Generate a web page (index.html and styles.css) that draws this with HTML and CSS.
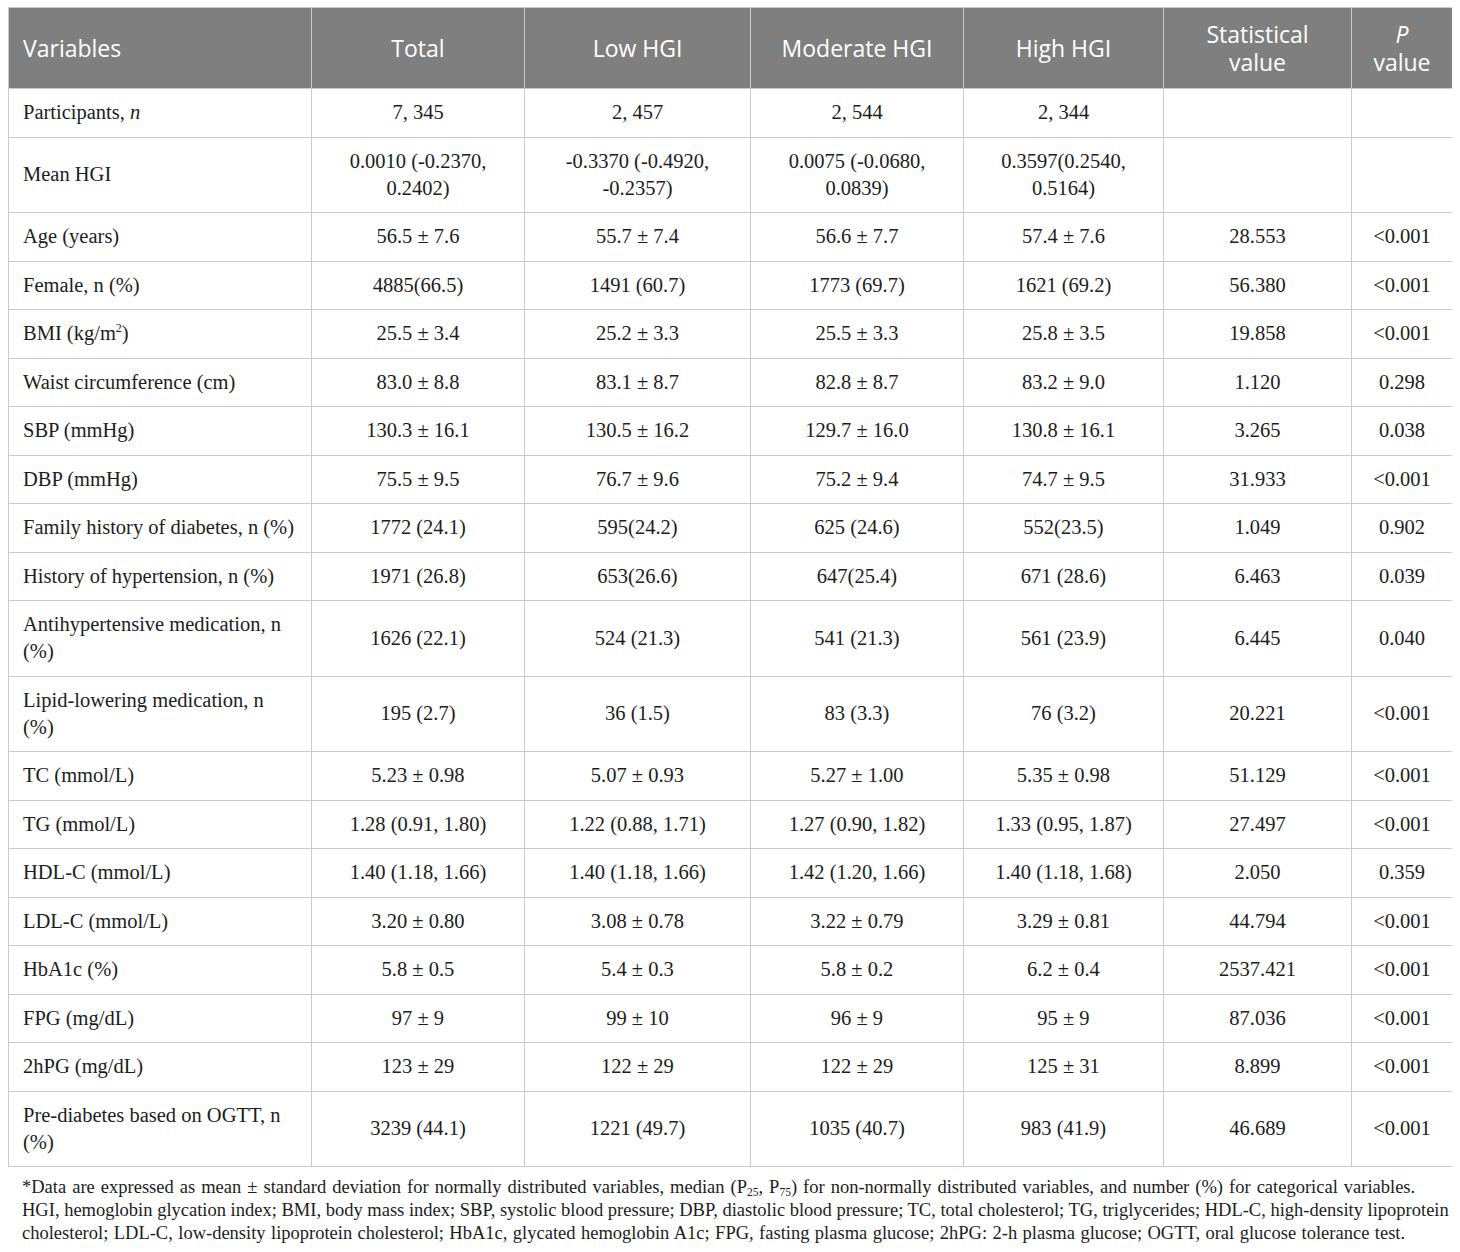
FILE: index.html
```html
<!DOCTYPE html>
<html>
<head>
<meta charset="utf-8">
<link rel="stylesheet" href="styles.css">
</head>
<body>
<table class="data">
<colgroup>
<col class="c1"><col class="c2"><col class="c3"><col class="c4"><col class="c5"><col class="c6"><col class="c7">
</colgroup>
<thead>
<tr><th class="left">Variables</th><th>Total</th><th>Low HGI</th><th>Moderate HGI</th><th>High HGI</th><th><span class="hl">Statistical</span><span class="hl">value</span></th><th><span class="hl"><i>P</i></span><span class="hl">value</span></th></tr>
</thead>
<tbody>
<tr><td class="left">Participants, <i>n</i></td><td>7, 345</td><td>2, 457</td><td>2, 544</td><td>2, 344</td><td></td><td></td></tr>
<tr><td class="left">Mean HGI</td><td>0.0010 (-0.2370,<br>0.2402)</td><td>-0.3370 (-0.4920,<br>-0.2357)</td><td>0.0075 (-0.0680,<br>0.0839)</td><td>0.3597(0.2540,<br>0.5164)</td><td></td><td></td></tr>
<tr><td class="left">Age (years)</td><td>56.5 ± 7.6</td><td>55.7 ± 7.4</td><td>56.6 ± 7.7</td><td>57.4 ± 7.6</td><td>28.553</td><td>&lt;0.001</td></tr>
<tr><td class="left">Female, n (%)</td><td>4885(66.5)</td><td>1491 (60.7)</td><td>1773 (69.7)</td><td>1621 (69.2)</td><td>56.380</td><td>&lt;0.001</td></tr>
<tr><td class="left">BMI (kg/m<sup>2</sup>)</td><td>25.5 ± 3.4</td><td>25.2 ± 3.3</td><td>25.5 ± 3.3</td><td>25.8 ± 3.5</td><td>19.858</td><td>&lt;0.001</td></tr>
<tr><td class="left">Waist circumference (cm)</td><td>83.0 ± 8.8</td><td>83.1 ± 8.7</td><td>82.8 ± 8.7</td><td>83.2 ± 9.0</td><td>1.120</td><td>0.298</td></tr>
<tr><td class="left">SBP (mmHg)</td><td>130.3 ± 16.1</td><td>130.5 ± 16.2</td><td>129.7 ± 16.0</td><td>130.8 ± 16.1</td><td>3.265</td><td>0.038</td></tr>
<tr><td class="left">DBP (mmHg)</td><td>75.5 ± 9.5</td><td>76.7 ± 9.6</td><td>75.2 ± 9.4</td><td>74.7 ± 9.5</td><td>31.933</td><td>&lt;0.001</td></tr>
<tr><td class="left">Family history of diabetes, n (%)</td><td>1772 (24.1)</td><td>595(24.2)</td><td>625 (24.6)</td><td>552(23.5)</td><td>1.049</td><td>0.902</td></tr>
<tr><td class="left">History of hypertension, n (%)</td><td>1971 (26.8)</td><td>653(26.6)</td><td>647(25.4)</td><td>671 (28.6)</td><td>6.463</td><td>0.039</td></tr>
<tr><td class="left">Antihypertensive medication, n<br>(%)</td><td>1626 (22.1)</td><td>524 (21.3)</td><td>541 (21.3)</td><td>561 (23.9)</td><td>6.445</td><td>0.040</td></tr>
<tr><td class="left">Lipid-lowering medication, n<br>(%)</td><td>195 (2.7)</td><td>36 (1.5)</td><td>83 (3.3)</td><td>76 (3.2)</td><td>20.221</td><td>&lt;0.001</td></tr>
<tr><td class="left">TC (mmol/L)</td><td>5.23 ± 0.98</td><td>5.07 ± 0.93</td><td>5.27 ± 1.00</td><td>5.35 ± 0.98</td><td>51.129</td><td>&lt;0.001</td></tr>
<tr><td class="left">TG (mmol/L)</td><td>1.28 (0.91, 1.80)</td><td>1.22 (0.88, 1.71)</td><td>1.27 (0.90, 1.82)</td><td>1.33 (0.95, 1.87)</td><td>27.497</td><td>&lt;0.001</td></tr>
<tr><td class="left">HDL-C (mmol/L)</td><td>1.40 (1.18, 1.66)</td><td>1.40 (1.18, 1.66)</td><td>1.42 (1.20, 1.66)</td><td>1.40 (1.18, 1.68)</td><td>2.050</td><td>0.359</td></tr>
<tr><td class="left">LDL-C (mmol/L)</td><td>3.20 ± 0.80</td><td>3.08 ± 0.78</td><td>3.22 ± 0.79</td><td>3.29 ± 0.81</td><td>44.794</td><td>&lt;0.001</td></tr>
<tr><td class="left">HbA1c (%)</td><td>5.8 ± 0.5</td><td>5.4 ± 0.3</td><td>5.8 ± 0.2</td><td>6.2 ± 0.4</td><td>2537.421</td><td>&lt;0.001</td></tr>
<tr><td class="left">FPG (mg/dL)</td><td>97 ± 9</td><td>99 ± 10</td><td>96 ± 9</td><td>95 ± 9</td><td>87.036</td><td>&lt;0.001</td></tr>
<tr><td class="left">2hPG (mg/dL)</td><td>123 ± 29</td><td>122 ± 29</td><td>122 ± 29</td><td>125 ± 31</td><td>8.899</td><td>&lt;0.001</td></tr>
<tr><td class="left">Pre-diabetes based on OGTT, n<br>(%)</td><td>3239 (44.1)</td><td>1221 (49.7)</td><td>1035 (40.7)</td><td>983 (41.9)</td><td>46.689</td><td>&lt;0.001</td></tr>
</tbody>
</table>
<div class="note">
<div class="nl l1">*Data are expressed as mean ± standard deviation for normally distributed variables, median (P<sub>25</sub>, P<sub>75</sub>) for non-normally distributed variables, and number (%) for categorical variables.</div>
<div class="nl">HGI, hemoglobin glycation index; BMI, body mass index; SBP, systolic blood pressure; DBP, diastolic blood pressure; TC, total cholesterol; TG, triglycerides; HDL-C, high-density lipoprotein</div>
<div class="nl l3">cholesterol; LDL-C, low-density lipoprotein cholesterol; HbA1c, glycated hemoglobin A1c; FPG, fasting plasma glucose; 2hPG: 2-h plasma glucose; OGTT, oral glucose tolerance test.</div>
</div>
</body>
</html>
```

FILE: styles.css
```css
html, body {
  background: #ffffff;
}
body {
  margin: 7px 8px 0 8px;
  font-family: "Liberation Serif", "Times New Roman", serif;
  color: #1c1c1c;
}
.data {
  border-collapse: collapse;
  table-layout: fixed;
  width: 1444px;
  border: 1px solid #c9c9c9;
}
.c1 { width: 303px; }
.c2 { width: 213px; }
.c3 { width: 226px; }
.c4 { width: 213px; }
.c5 { width: 200px; }
.c6 { width: 188px; }
.c7 { width: 101px; }
.data th {
  background: #7f7f7f;
  color: #ffffff;
  font-family: "Open Sans", "Liberation Sans", sans-serif;
  font-weight: 400;
  font-size: 23px;
  line-height: 28px;
  padding: 12px 14px 12px 14px;
  height: 56px;
  text-align: center;
  border: 1px solid #c9c9c9;
  border-top: none;
}
.hl {
  display: block;
  height: 28px;
  line-height: 28px;
}
.data td {
  font-size: 20.5px;
  line-height: 27px;
  padding: 10px 14px 10.5px 14px;
  text-align: center;
  border: 1px solid #c9c9c9;
  vertical-align: middle;
}
.data th.left, .data td.left {
  text-align: left;
}
sup {
  font-size: 12px;
  line-height: 0;
  vertical-align: 8px;
}
.note {
  margin: 9px 0 0 14px;
  font-size: 18.5px;
  line-height: 23px;
  color: #1c1c1c;
}
.nl {
  white-space: nowrap;
}
.l1 {
  word-spacing: 1.4px;
}
.l3 {
  word-spacing: 0.8px;
}
sub {
  font-size: 11.5px;
  line-height: 0;
  vertical-align: -3px;
}
```
